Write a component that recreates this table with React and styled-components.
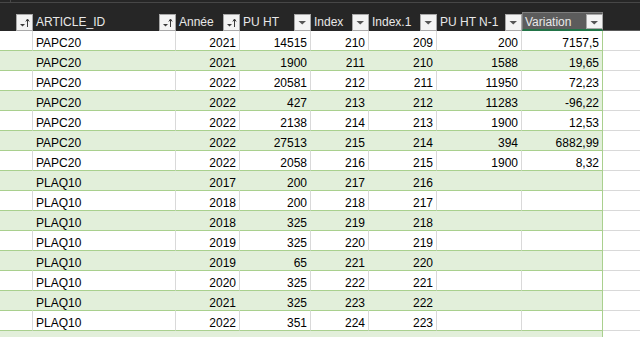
import React from "react";
import styled, { createGlobalStyle, css } from "styled-components";

const GlobalStyle = createGlobalStyle`
  html, body { margin: 0; padding: 0; background: #ffffff; }
  body { font-family: "Liberation Sans", Arial, sans-serif; font-size: 12px; }
`;

const COLS = "33px 143px 64px 71px 58px 68px 85px 81px 1fr";

const columns = [
  { key: "blank", label: "", sort: true, align: "left" },
  { key: "id", label: "ARTICLE_ID", sort: true, align: "left" },
  { key: "annee", label: "Année", sort: true, align: "right" },
  { key: "pu", label: "PU HT", align: "right" },
  { key: "index", label: "Index", align: "right" },
  { key: "index1", label: "Index.1", align: "right" },
  { key: "puN1", label: "PU HT N-1", align: "right" },
  { key: "variation", label: "Variation", align: "right", selected: true },
];

const rows = [
  ["", "PAPC20", "2021", "14515", "210", "209", "200", "7157,5"],
  ["", "PAPC20", "2021", "1900", "211", "210", "1588", "19,65"],
  ["", "PAPC20", "2022", "20581", "212", "211", "11950", "72,23"],
  ["", "PAPC20", "2022", "427", "213", "212", "11283", "-96,22"],
  ["", "PAPC20", "2022", "2138", "214", "213", "1900", "12,53"],
  ["", "PAPC20", "2022", "27513", "215", "214", "394", "6882,99"],
  ["", "PAPC20", "2022", "2058", "216", "215", "1900", "8,32"],
  ["", "PLAQ10", "2017", "200", "217", "216", "", ""],
  ["", "PLAQ10", "2018", "200", "218", "217", "", ""],
  ["", "PLAQ10", "2018", "325", "219", "218", "", ""],
  ["", "PLAQ10", "2019", "325", "220", "219", "", ""],
  ["", "PLAQ10", "2019", "65", "221", "220", "", ""],
  ["", "PLAQ10", "2020", "325", "222", "221", "", ""],
  ["", "PLAQ10", "2021", "325", "223", "222", "", ""],
  ["", "PLAQ10", "2022", "351", "224", "223", "", ""],
  ["", "", "", "", "", "", "", ""],
];

const Sheet = styled.div`
  width: 640px;
  height: 337px;
  overflow: hidden;
  background: #ffffff;
`;

const TopStrip = styled.div`
  display: flex;
  height: 2px;
  background: #262626;
  border-bottom: 1px solid #474747;
`;

const TopCell = styled.div`
  width: 10px;
  border-right: 1px solid #474747;
`;

const HeaderRow = styled.div`
  display: grid;
  grid-template-columns: ${COLS};
  height: 28px;
  background: #262626;
`;

const HeaderCell = styled.div`
  display: flex;
  align-items: flex-end;
  justify-content: space-between;
  min-width: 0;
  ${(p) =>
    p.$selected &&
    css`
      margin-top: 9px;
      background: #5c5c5c;
      border: 1px solid #7d7d7d;
      border-bottom: 2px solid #217346;
    `}
`;

const HeaderFiller = styled.div`
  border-bottom: 1px solid #5a5a5a;
`;

const HeaderLabel = styled.span`
  color: #e8e8e8;
  line-height: 14px;
  padding: 0 0 2px 3px;
  white-space: nowrap;
  ${(p) => p.$selected && css`padding-bottom: 0; margin-left: -1px;`}
`;

const FilterButton = styled.div`
  box-sizing: border-box;
  width: 17px;
  height: 17px;
  flex: none;
  background: #f3f3f3;
  border: 1px solid #a8a8a8;
  display: flex;
  ${(p) => p.$selected && css`height: 15px; margin-right: -1px;`}
`;

const Row = styled.div`
  display: grid;
  grid-template-columns: ${COLS};
`;

const Cell = styled.div`
  box-sizing: border-box;
  height: 20px;
  padding: 5px 3px 0 3px;
  line-height: 14px;
  color: #000000;
  white-space: nowrap;
  overflow: hidden;
  text-align: ${(p) => p.$align};
  background: ${(p) => (p.$band ? "#e2efda" : "#ffffff")};
  border-bottom: 1px solid #a9d08e;
  border-right: 1px solid ${(p) => (p.$band ? "#e2efda" : "#d9d9d9")};
  ${(p) => p.$last && css`border-right-color: #a9d08e;`}
`;

const OutsideCell = styled.div`
  height: 20px;
  box-sizing: border-box;
  border-bottom: 1px solid #d9d9d9;
`;

const SortIcon = () => (
  <svg width="15" height="15" viewBox="0 0 15 15">
    <path d="M3 9 L8 9 L5.5 11.5 Z" fill="#3a3a3a" />
    <path d="M10.5 4.5 V12" stroke="#3a3a3a" strokeWidth="1" />
    <path d="M8.8 6.5 L10.5 4 L12.2 6.5" stroke="#3a3a3a" strokeWidth="1" fill="none" />
  </svg>
);

const DropIcon = () => (
  <svg width="15" height="15" viewBox="0 0 15 15">
    <path d="M3.5 6 L11 6 L7.25 9.5 Z" fill="#555555" />
  </svg>
);

export default function App() {
  return (
    <>
      <GlobalStyle />
      <Sheet>
        <TopStrip>
          <TopCell />
        </TopStrip>
        <HeaderRow>
          {columns.map((c) => (
            <HeaderCell key={c.key} $selected={c.selected}>
              <HeaderLabel $selected={c.selected}>{c.label}</HeaderLabel>
              <FilterButton $selected={c.selected}>
                {c.sort ? <SortIcon /> : <DropIcon />}
              </FilterButton>
            </HeaderCell>
          ))}
          <HeaderFiller />
        </HeaderRow>
        {rows.map((r, i) => (
          <Row key={i}>
            {r.map((v, j) => (
              <Cell
                key={j}
                $band={i % 2 === 1}
                $align={columns[j].align}
                $last={j === columns.length - 1}
              >
                {v}
              </Cell>
            ))}
            <OutsideCell />
          </Row>
        ))}
      </Sheet>
    </>
  );
}
